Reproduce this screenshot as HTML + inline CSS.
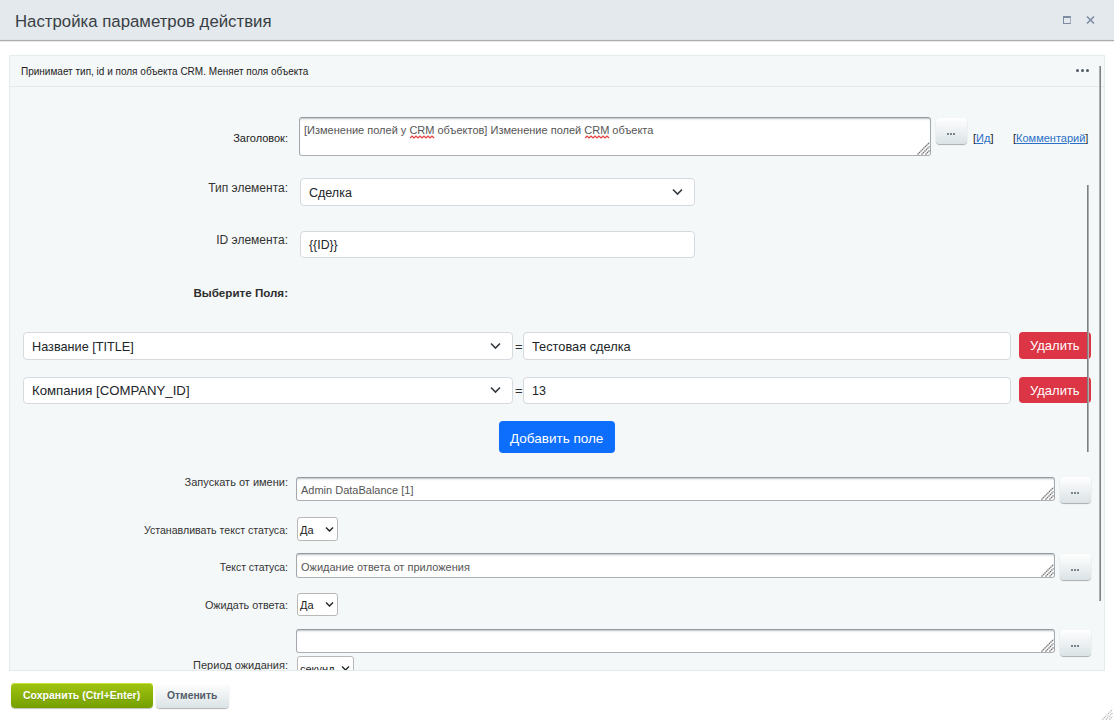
<!DOCTYPE html>
<html><head><meta charset="utf-8">
<style>
html,body{margin:0;padding:0}
body{width:1114px;height:720px;position:relative;overflow:hidden;background:#fff;font-family:"Liberation Sans",sans-serif;color:#333}
.a{position:absolute}
.t{position:absolute;white-space:nowrap}
.hdr{left:0;top:0;width:1114px;height:39px;background:#e3e9ec}
.hl1{left:0;top:39px;width:1114px;height:1px;background:#dfe3e5}
.hl2{left:0;top:40px;width:1114px;height:1px;background:#acaeaf}
.hl3{left:0;top:41px;width:1114px;height:1px;background:#e6e7e8}
.panel{left:9px;top:55px;width:1094px;height:614px;background:#f5f8f9;border:1px solid #e5ecef}
.sep{left:10px;top:86px;width:1094px;height:1px;background:#e3eaee}
.lbl{font-size:11px;color:#333;text-align:right;width:288px;left:0}
.ta{background:#fff;border:1px solid;border-color:#939aa1 #a3a9ae #aab0b5 #a3a9ae;border-radius:3px;box-shadow:inset 0 2px 2px -1px rgba(170,176,180,.8);box-sizing:border-box}
.btn{border-radius:4px;background:linear-gradient(#fff,#dbe3e6);box-shadow:0 0 1px rgba(0,0,0,.11),0 1px 1px rgba(0,0,0,.3),inset 0 1px #fff;box-sizing:border-box}
.dots{position:absolute;left:0;right:0;text-align:center;font-size:11px;color:#444}
.bs{background:#fff;border:1px solid #d5dadf;border-radius:4px;box-sizing:border-box}
.chev{position:absolute}
.sel{background:#fff;border:1px solid #b8b8b8;border-radius:3px;box-sizing:border-box}
.red{background:#dc3545;border-radius:4px}
.grip{position:absolute}
.dd{position:absolute;left:11px;top:15px;width:2px;height:2px;background:#7b838d;box-shadow:3px 0 0 #7b838d,6px 0 0 #7b838d}

</style></head><body>
<div class="a hdr"></div>
<div class="a hl1"></div><div class="a hl2"></div><div class="a hl3"></div>
<div class="t" style="left:15px;top:12px;font-size:16.8px;line-height:20px;color:#393e44">Настройка параметров действия</div>
<!-- maximize -->
<div class="a" style="left:1063px;top:16px;width:8px;height:8px;box-sizing:border-box;border:1px solid #7d8ca1;border-right-color:#a5b0be;border-top-width:2px"></div>
<svg class="a" style="left:1085px;top:15px" width="10" height="10" viewBox="0 0 10 10"><path d="M2 1.5L9 8.5M9 1.5L2 8.5" stroke="#7d8ca1" stroke-width="1.6"/></svg>

<div class="a panel"></div>
<div class="a sep"></div>
<div class="t" style="left:21px;top:66px;font-size:10px;line-height:12px;color:#222">Принимает тип, id и поля объекта CRM. Меняет поля объекта</div>
<div class="a" style="left:1076px;top:69px;width:3px;height:3px;border-radius:50%;background:#535c69"></div>
<div class="a" style="left:1081px;top:69px;width:3px;height:3px;border-radius:50%;background:#535c69"></div>
<div class="a" style="left:1086px;top:69px;width:3px;height:3px;border-radius:50%;background:#535c69"></div>

<!-- Заголовок -->
<div class="t lbl" style="top:132px;line-height:13px;color:#1a1a1a">Заголовок:</div>
<div class="a ta" style="left:299px;top:117px;width:632px;height:39px"></div>
<div class="t" style="left:304px;top:124px;font-size:11px;line-height:13px;color:#555">[Изменение полей у CRM объектов] Изменение полей CRM объекта</div>
<svg class="a" style="left:917px;top:142px" width="13" height="13" viewBox="0 0 13 13"><path d="M0.5 12.5L12.5 0.5M4.5 12.5L12.5 4.5M8.5 12.5L12.5 8.5" stroke="#707070" stroke-width="1.3" stroke-dasharray="1.5 0.6"/></svg><div class="a btn" style="left:936px;top:118px;width:31px;height:26px"><div class="dd"></div></div>
<div class="t" style="left:973px;top:132px;font-size:11px;line-height:13px;color:#222">[<span style="color:#2a70c6;text-decoration:underline">Ид</span>]</div>
<div class="t" style="left:1013px;top:132px;font-size:11px;line-height:13px;color:#222">[<span style="color:#2a70c6;text-decoration:underline">Комментарий</span>]</div>

<svg class="a" style="left:410px;top:135px" width="25" height="4" viewBox="0 0 25 4"><path d="M0.0 3 L2.0 1 L4.0 3 L6.0 1 L8.0 3 L10.0 1 L12.0 3 L14.0 1 L16.0 3 L18.0 1 L20.0 3 L22.0 1 L24.0 3" fill="none" stroke="#e33b3b" stroke-width="1.15"/></svg><svg class="a" style="left:585px;top:135px" width="25" height="4" viewBox="0 0 25 4"><path d="M0.0 3 L2.0 1 L4.0 3 L6.0 1 L8.0 3 L10.0 1 L12.0 3 L14.0 1 L16.0 3 L18.0 1 L20.0 3 L22.0 1 L24.0 3" fill="none" stroke="#e33b3b" stroke-width="1.15"/></svg>
<!-- Тип элемента -->
<div class="t lbl" style="top:181px;font-size:12px;line-height:15px">Тип элемента:</div>
<div class="a bs" style="left:300px;top:178px;width:395px;height:28px"></div>
<div class="t" style="left:309px;top:186px;font-size:12.5px;line-height:15px;color:#212529">Сделка</div>
<svg class="a" style="left:672px;top:188px" width="11" height="8" viewBox="0 0 11 8"><path d="M1 1.5L5.5 6L10 1.5" fill="none" stroke="#343a40" stroke-width="1.6"/></svg>

<!-- ID -->
<div class="t lbl" style="top:233px;font-size:12px;line-height:15px">ID элемента:</div>
<div class="a bs" style="left:300px;top:231px;width:395px;height:27px"></div>
<div class="t" style="left:309px;top:238px;font-size:12.3px;line-height:15px;color:#212529">{{ID}}</div>

<div class="t lbl" style="top:286px;font-size:11.6px;line-height:14px;font-weight:bold;color:#2e2e2e">Выберите Поля:</div>

<!-- fields -->
<div class="a bs" style="left:23px;top:332px;width:490px;height:28px"></div>
<div class="t" style="left:32px;top:340px;font-size:12.7px;line-height:15px;color:#212529">Название [TITLE]</div>
<svg class="a" style="left:490px;top:342px" width="11" height="8" viewBox="0 0 11 8"><path d="M1 1.5L5.5 6L10 1.5" fill="none" stroke="#343a40" stroke-width="1.6"/></svg>
<div class="t" style="left:515px;top:339px;font-size:13px;line-height:15px;color:#333">=</div>
<div class="a bs" style="left:523px;top:332px;width:488px;height:28px"></div>
<div class="t" style="left:532px;top:339px;font-size:12.8px;line-height:15px;color:#212529">Тестовая сделка</div>
<div class="a red" style="left:1019px;top:332px;width:72px;height:27px"></div>
<div class="t" style="left:1030px;top:338px;font-size:13px;line-height:15px;color:#fff">Удалить</div>

<div class="a bs" style="left:23px;top:377px;width:490px;height:27px"></div>
<div class="t" style="left:32px;top:383px;font-size:13.2px;line-height:15px;color:#212529">Компания [COMPANY_ID]</div>
<svg class="a" style="left:490px;top:386px" width="11" height="8" viewBox="0 0 11 8"><path d="M1 1.5L5.5 6L10 1.5" fill="none" stroke="#343a40" stroke-width="1.6"/></svg>
<div class="t" style="left:515px;top:383px;font-size:13px;line-height:15px;color:#333">=</div>
<div class="a bs" style="left:523px;top:377px;width:488px;height:27px"></div>
<div class="t" style="left:532px;top:384px;font-size:12.5px;line-height:15px;color:#212529">13</div>
<div class="a red" style="left:1019px;top:377px;width:72px;height:26px"></div>
<div class="t" style="left:1030px;top:383px;font-size:13px;line-height:15px;color:#fff">Удалить</div>

<div class="a" style="left:499px;top:421px;width:116px;height:32px;background:#0d6efd;border-radius:4px"></div>
<div class="t" style="left:510px;top:431px;font-size:13.5px;line-height:15px;color:#fff">Добавить поле</div>

<!-- Запускать -->
<div class="t lbl" style="top:476px;line-height:13px">Запускать от имени:</div>
<div class="a ta" style="left:296px;top:477px;width:759px;height:24px"></div>
<div class="t" style="left:301px;top:484px;font-size:11px;line-height:13px;color:#555">Admin DataBalance [1]</div>
<svg class="a" style="left:1041px;top:487px" width="13" height="13" viewBox="0 0 13 13"><path d="M0.5 12.5L12.5 0.5M4.5 12.5L12.5 4.5M8.5 12.5L12.5 8.5" stroke="#707070" stroke-width="1.3" stroke-dasharray="1.5 0.6"/></svg><div class="a btn" style="left:1060px;top:477px;width:31px;height:26px"><div class="dd"></div></div>

<div class="t lbl" style="top:524px;font-size:10.6px;line-height:13px">Устанавливать текст статуса:</div>
<div class="a sel" style="left:297px;top:517px;width:41px;height:24px"></div>
<div class="t" style="left:300px;top:524px;font-size:11px;line-height:13px;color:#222">Да</div>
<svg class="a" style="left:325px;top:526px" width="9" height="7" viewBox="0 0 9 7"><path d="M1 1.5L4.5 5L8 1.5" fill="none" stroke="#222" stroke-width="1.35"/></svg>

<div class="t lbl" style="top:561px;font-size:10.4px;line-height:13px">Текст статуса:</div>
<div class="a ta" style="left:296px;top:553px;width:759px;height:25px"></div>
<div class="t" style="left:301px;top:561px;font-size:11px;line-height:13px;color:#555">Ожидание ответа от приложения</div>
<svg class="a" style="left:1041px;top:564px" width="13" height="13" viewBox="0 0 13 13"><path d="M0.5 12.5L12.5 0.5M4.5 12.5L12.5 4.5M8.5 12.5L12.5 8.5" stroke="#707070" stroke-width="1.3" stroke-dasharray="1.5 0.6"/></svg><div class="a btn" style="left:1060px;top:554px;width:31px;height:26px"><div class="dd"></div></div>

<div class="t lbl" style="top:599px;font-size:10.8px;line-height:13px">Ожидать ответа:</div>
<div class="a sel" style="left:297px;top:593px;width:41px;height:23px"></div>
<div class="t" style="left:300px;top:599px;font-size:11px;line-height:13px;color:#222">Да</div>
<svg class="a" style="left:325px;top:601px" width="9" height="7" viewBox="0 0 9 7"><path d="M1 1.5L4.5 5L8 1.5" fill="none" stroke="#222" stroke-width="1.35"/></svg>

<div class="a ta" style="left:296px;top:629px;width:759px;height:24px"></div>
<svg class="a" style="left:1041px;top:639px" width="13" height="13" viewBox="0 0 13 13"><path d="M0.5 12.5L12.5 0.5M4.5 12.5L12.5 4.5M8.5 12.5L12.5 8.5" stroke="#707070" stroke-width="1.3" stroke-dasharray="1.5 0.6"/></svg><div class="a btn" style="left:1060px;top:630px;width:31px;height:26px"><div class="dd"></div></div>

<div class="a" style="left:0;top:0;width:1114px;height:670px;overflow:hidden">
<div class="t lbl" style="top:659px;line-height:13px">Период ожидания:</div>
<div class="a sel" style="left:297px;top:656px;width:57px;height:24px"></div>
<div class="t" style="left:300px;top:663px;font-size:11px;line-height:13px;color:#222">секунд</div>
<svg class="a" style="left:341px;top:665px" width="9" height="7" viewBox="0 0 9 7"><path d="M1 1.5L4.5 5L8 1.5" fill="none" stroke="#222" stroke-width="1.35"/></svg>
</div>

<!-- scrollbars -->
<div class="a" style="left:1099px;top:66px;width:1px;height:535px;background:#adadad"></div><div class="a" style="left:1100px;top:66px;width:1px;height:535px;background:#808080"></div>
<div class="a" style="left:1087px;top:185px;width:1px;height:267px;background:#808080"></div><div class="a" style="left:1088px;top:185px;width:1px;height:267px;background:#adadad"></div>

<!-- footer -->
<div class="a" style="left:11px;top:683px;width:142px;height:25px;border-radius:4px;background:linear-gradient(#a2c511,#749f00);box-shadow:0 1px 1px rgba(0,0,0,.25),inset 0 1px 0 #c6e13a"></div>
<div class="t" style="left:23px;top:689px;font-size:10.5px;line-height:13px;font-weight:bold;color:#fff;text-shadow:0 1px rgba(0,0,0,.15)">Сохранить (Ctrl+Enter)</div>
<div class="a btn" style="left:156px;top:683px;width:73px;height:25px"></div>
<div class="t" style="left:167px;top:689px;font-size:10.3px;line-height:13px;font-weight:bold;color:#535c69">Отменить</div>
<svg class="a" style="left:1101px;top:707px" width="13" height="13" viewBox="0 0 13 13"><path d="M1.5 12.5L11.5 2.5M5 12.5L11.5 6M8.5 12.5L11.5 9.5" stroke="#a0a0a0" stroke-width="1.2" stroke-dasharray="1 1"/></svg>
</body></html>
